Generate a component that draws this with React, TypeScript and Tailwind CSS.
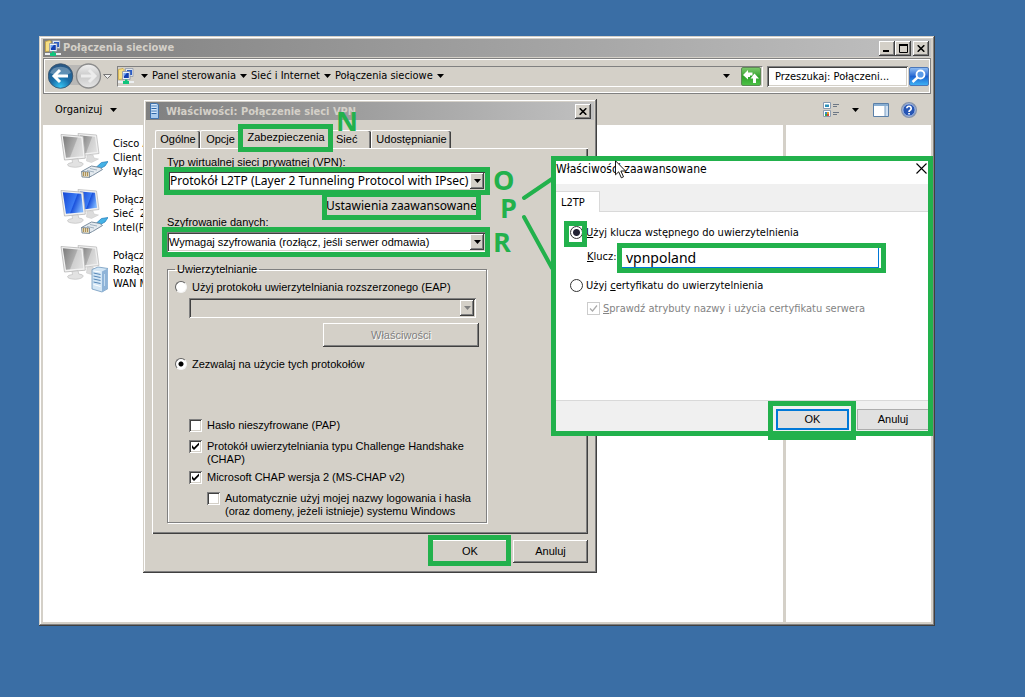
import { useState, type ReactNode } from 'react';

const raised =
  'bg-[#d4d0c8] shadow-[inset_-1px_-1px_#404040,inset_1px_1px_#ffffff,inset_-2px_-2px_#808080]';
const frame =
  'bg-[#d4d0c8] shadow-[inset_-1px_-1px_#404040,inset_1px_1px_#d4d0c8,inset_-2px_-2px_#808080,inset_2px_2px_#ffffff]';
const sunken =
  'shadow-[inset_1px_1px_#808080,inset_-1px_-1px_#ffffff,inset_2px_2px_#404040,inset_-2px_-2px_#d4d0c8]';
const tahoma = "font-['DejaVu_Sans_Condensed','DejaVu_Sans',sans-serif]";
const noto = "font-['Noto_Sans','Open_Sans',sans-serif]";
const arial = "font-['Liberation_Sans',Arial,sans-serif]";

function Highlight({ className }: { className: string }) {
  return <span aria-hidden="true" className={`pointer-events-none absolute border-[5px] border-[#22b14c] ${className}`} />;
}

function Down({ className = 'text-black' }: { className?: string }) {
  return (
    <svg aria-hidden="true" width="7" height="4" viewBox="0 0 7 4" className={`shrink-0 ${className}`}>
      <path d="M0 0h7L3.5 4z" fill="currentColor" />
    </svg>
  );
}

function CloseGlyph() {
  return (
    <svg aria-hidden="true" width="8" height="7" viewBox="0 0 8 7">
      <path d="M.7.3 7.3 6.7M7.3.3.7 6.7" stroke="#000" strokeWidth="1.6" />
    </svg>
  );
}

function TitleButton({ label, children }: { label: string; children: ReactNode }) {
  return (
    <button aria-label={label} className={`flex h-[15px] w-4 items-center justify-center ${raised}`}>
      {children}
    </button>
  );
}

function NetworkIcon() {
  return (
    <svg aria-hidden="true" width="16" height="16" viewBox="0 0 16 16" className="shrink-0">
      <path d="M.5 1.500 5 .5l1 1v9.500l-5.500.5z" fill="#f7df86" stroke="#c9a437" strokeWidth=".7" />
      <path d="M7.500.500h7.500v8H7.500z" fill="#dfe6f0" stroke="#8a94a4" strokeWidth=".7" />
      <path d="M9 2h5v5H9z" fill="#2a5cc8" />
      <path d="M4.500 3.500h7.500v8H4.500z" fill="#eef2f8" stroke="#7c889c" strokeWidth=".7" />
      <path d="M5.800 5h5v5h-5z" fill="#1540b0" />
      <path d="M5.800 5h3l-3 3.500z" fill="#6fa4f0" />
      <path d="M0 14h16" stroke="#eceff2" strokeWidth="2" />
      <path d="M7 11.500h2.500V13H11v3H5v-3h2z" fill="#10c47c" />
    </svg>
  );
}

function Monitors({ active = false, server = false }: { active?: boolean; server?: boolean }) {
  const id = active ? 'on' : server ? 'srv' : 'off';
  return (
    <svg aria-hidden="true" width="48" height="48" viewBox="0 0 48 48" className="shrink-0">
      <defs>
        <linearGradient id={`scr-${id}`} x1="0" y1=".2" x2="1" y2=".6">
          <stop offset="0" stopColor={active ? '#1a4cd6' : '#808080'} />
          <stop offset=".55" stopColor={active ? '#3a7af4' : '#adadad'} />
          <stop offset=".6" stopColor={active ? '#1b52dc' : '#cfcfcf'} />
          <stop offset="1" stopColor={active ? '#7ab4ff' : '#dedede'} />
        </linearGradient>
      </defs>
      <path d="m18 .5 18.500 1.500 2.500 18.500L22 22.500z" fill="#f0f0f0" stroke="#bdbdbd" strokeWidth=".8" />
      <path d="m20 2.500 15 1.200 2 15L23 20.500z" fill={`url(#scr-${id})`} />
      <path d="m27 22.500 6-.5 1 3 4.500 1-7 3.500-5-1.500z" fill="#dcdcdc" stroke="#c6c6c6" strokeWidth=".5" />
      <path d="m1 1.500 22 1.700 2.300 22L4.500 27z" fill="#f2f2f2" stroke="#b4b4b4" strokeWidth=".8" />
      <path d="m2.800 3.300 18.500 1.400 2 18.500L6 24.700z" fill={`url(#scr-${id})`} />
      <path d="m12 26.500 6-.8.8 3.300q4.500.5 4.500 2-1 3-8 3.300Q7.500 34 7.500 31.500q.5-1.500 5-2z" fill="#e2e2e2" stroke="#b8b8b8" strokeWidth=".6" />
      {server ? (
        <g>
          <path d="m32 24.500 6-2.500 10 1.500v20L42 47l-10-3z" fill="#d3e6f5" stroke="#6f97bd" strokeWidth=".8" />
          <path d="m42 26.500 5.800-3v20L42 47z" fill="#8fb4d8" />
          <path d="m33.500 28 7 1.500m-7 1.500 7 1.500m-7 1.500 7 1.500m-7 1.500 7 1.500" stroke="#5687b8" />
          <path d="m33.500 26 7 1m-7 12.500 7 2" stroke="#fff" />
          <path d="M44.500 29v12" stroke="#c5dcf0" />
        </g>
      ) : (
        <g>
          <path d="m36.500 34 5-4.500 6.500-1-3 4.500-5.500 3z" fill="#45b2e6" stroke="#1f7ab8" strokeWidth=".7" />
          <path d="m21.500 38.500 10-5.500 8.500 1.500 2.500 2-10 6-3 1.500z" fill="#e4eaef" stroke="#6f8396" strokeWidth=".9" />
          <path d="m30 35.500 7 1.500M27 37.500l7 1.500" stroke="#8fa3b4" strokeWidth=".8" />
          <path d="m21.500 38.500 8 .5v5.500l-7.500-.5z" fill="#e2d8bc" stroke="#6f8396" strokeWidth=".8" />
          <path d="M23.500 39v4m2-4v4m2-4v4" stroke="#a08040" strokeWidth=".8" />
        </g>
      )}
    </svg>
  );
}

function ServerTower() {
  return (
    <svg aria-hidden="true" width="9" height="16" viewBox="0 0 9 16" className="shrink-0">
      <path d="M.5.500h6l2 1v14h-8z" fill="#a9cbee" stroke="#3f73ae" />
      <path d="M1.500 3h5M1.500 5.500h5M1.500 8h5M1.500 10.500h5" stroke="#2c66a8" />
      <path d="M1.500 1.800h5M1.500 4.200h5M1.500 6.800h5M1.500 9.300h5" stroke="#e8f3ff" />
    </svg>
  );
}

function Combo({ label, value, className, disabled = false }: { label: string; value: string; className: string; disabled?: boolean }) {
  return (
    <div className={`relative flex items-center ${sunken} ${className} ${disabled ? '' : 'bg-white'}`}>
      <select aria-label={label} disabled={disabled} className="h-full w-full appearance-none bg-transparent pr-4 pl-0.5 leading-[18px] text-black outline-none">
        <option>{value}</option>
      </select>
      <span className={`pointer-events-none absolute top-[2px] right-[2px] bottom-[2px] flex w-[14px] items-center justify-center ${raised}`}>
        <Down className={disabled ? 'text-[#808080]' : 'text-black'} />
      </span>
    </div>
  );
}

function ClassicRadio({ label, checked, onChange }: { label: string; checked: boolean; onChange: () => void }) {
  return (
    <label className="flex h-4 items-center gap-[5px]">
      <input
        type="radio"
        name="auth"
        checked={checked}
        onChange={onChange}
        className="size-3 shrink-0 appearance-none rounded-full border border-t-[#606060] border-r-[#f4f4f4] border-b-[#f4f4f4] border-l-[#606060] bg-white checked:bg-[radial-gradient(circle,#000_2px,#fff_3px)]"
      />
      {label}
    </label>
  );
}

function ClassicCheck({ lines, defaultChecked = false }: { lines: string[]; defaultChecked?: boolean }) {
  const [on, setOn] = useState(defaultChecked);
  return (
    <label className="flex items-start gap-[5px]">
      <span className="relative size-[13px] shrink-0">
        <input
          type="checkbox"
          checked={on}
          onChange={() => setOn(!on)}
          className={`block size-[13px] appearance-none bg-white ${sunken}`}
        />
        {on && (
          <svg aria-hidden="true" viewBox="0 0 13 13" className="pointer-events-none absolute inset-0">
            <path d="M3 5v3l2 2 5-5V2.500l-5 5z" fill="#000" />
          </svg>
        )}
      </span>
      <span>
        {lines.map((l) => (
          <span key={l} className="block">
            {l}
          </span>
        ))}
      </span>
    </label>
  );
}

const tabBase =
  'relative rounded-t-[2px] border-t border-l border-white px-1 shadow-[inset_-1px_0_#404040,inset_-2px_0_#808080]';

function VpnDialog() {
  const [auth, setAuth] = useState('list');
  return (
    <section
      aria-label="Właściwości: Połączenie sieci VPN"
      className={`absolute top-[99px] left-[143px] w-[454px] p-[3px] pb-[10px] ${arial} text-[11px] leading-[13px] ${frame}`}
    >
      <header className={`flex h-[18px] items-center gap-[7px] bg-linear-to-r from-[#808080] to-[#c0c0c0] pr-[3px] pl-1 ${tahoma} font-bold text-[#d4d0c8]`}>
        <ServerTower />
        <h2 className="flex-1">Właściwości: Połączenie sieci VPN</h2>
        <TitleButton label="Zamknij">
          <CloseGlyph />
        </TitleButton>
      </header>

      <div className="px-[6px] pt-[8px]">
        <div role="tablist" className="flex items-end pl-[3px]">
          <button role="tab" className={`${tabBase} h-[18px] w-[45px]`}>Ogólne</button>
          <button role="tab" className={`${tabBase} h-[18px] w-[40px]`}>Opcje</button>
          <button role="tab" aria-selected="true" className={`${tabBase} z-10 h-5 w-[91px] pb-0.5`}>
            Zabezpieczenia
            <Highlight className="-top-[5px] -right-[2px] -bottom-[4px] -left-[3px]" />
          </button>
          <button role="tab" className={`${tabBase} h-[18px] w-[40px] text-left`}>Sieć</button>
          <button role="tab" className={`${tabBase} h-[18px] w-[80px]`}>Udostępnianie</button>
        </div>

        <div className="border-t border-l border-white px-[14px] pt-[7px] pb-[11px] shadow-[inset_-1px_-1px_#404040,inset_-2px_-2px_#808080]">
          <p>Typ wirtualnej sieci prywatnej (VPN):</p>
          <div className="relative mt-0.5 ml-px w-[318px]">
            <Combo label="Typ wirtualnej sieci prywatnej" value="Protokół L2TP (Layer 2 Tunneling Protocol with IPsec)" className={`h-5 text-[12px] ${noto}`} />
            <Highlight className="-inset-[4px]" />
          </div>
          <div className="mt-1 ml-[159px] w-[151px]">
            <button className={`relative block h-5 w-full whitespace-nowrap text-[12px] ${noto}`}>
              Ustawienia zaawansowane
              <Highlight className="-top-[3px] -right-[4px] -bottom-[5px] -left-[4px]" />
            </button>
          </div>
          <p className="mt-px">Szyfrowanie danych:</p>
          <div className="relative mt-[3px] w-[319px]">
            <Combo label="Szyfrowanie danych" value="Wymagaj szyfrowania (rozłącz, jeśli serwer odmawia)" className="h-5" />
            <Highlight className="-top-[5px] -right-[4px] -bottom-[5px] -left-[5px]" />
          </div>

          <fieldset className="mt-[11px] w-[319px] border border-[#808080] px-[7px] pb-1 shadow-[1px_1px_#fff,inset_1px_1px_#fff]">
            <legend className="px-0.5">Uwierzytelnianie</legend>
            <div className="pt-[3px]">
              <ClassicRadio label="Użyj protokołu uwierzytelniania rozszerzonego (EAP)" checked={auth === 'eap'} onChange={() => setAuth('eap')} />
            </div>
            <Combo label="Metoda EAP" value="" disabled className="mt-[3px] ml-[14px] h-5 w-[287px]" />
            <button disabled className={`mt-[5px] ml-[148px] block h-6 w-[156px] text-[#808080] [text-shadow:1px_1px_#fff] ${raised}`}>
              Właściwości
            </button>
            <div className="pt-[9px]">
              <ClassicRadio label="Zezwalaj na użycie tych protokołów" checked={auth === 'list'} onChange={() => setAuth('list')} />
            </div>
            <div className="mt-[47px] ml-[14px] flex flex-col gap-2">
              <ClassicCheck lines={['Hasło nieszyfrowane (PAP)']} />
              <ClassicCheck lines={['Protokół uwierzytelniania typu Challenge Handshake', '(CHAP)']} defaultChecked />
              <div className="-mt-[3px]">
                <ClassicCheck lines={['Microsoft CHAP wersja 2 (MS-CHAP v2)']} defaultChecked />
              </div>
              <div className="ml-[18px]">
                <ClassicCheck lines={['Automatycznie użyj mojej nazwy logowania i hasła', '(oraz domeny, jeżeli istnieje) systemu Windows']} />
              </div>
            </div>
          </fieldset>
        </div>

        <footer className="mt-[6px] flex justify-end gap-1">
          <button className={`relative h-[23px] w-[78px] ${raised}`}>
            OK
            <Highlight className="-top-[5px] -right-[2px] -bottom-[3px] -left-[3px]" />
          </button>
          <button className={`h-[23px] w-[75px] ${raised}`}>Anuluj</button>
        </footer>
      </div>
    </section>
  );
}

function AdvancedDialog() {
  const [mode, setMode] = useState('key');
  const radio =
    'size-[13px] shrink-0 appearance-none rounded-full border border-[#333] bg-white checked:bg-[radial-gradient(circle,#223_3px,#fff_4px)]';
  return (
    <section
      aria-label="Właściwości zaawansowane"
      className={`absolute top-[156px] left-[551px] w-[382px] border-[5px] border-[#22b14c] bg-white text-[11px] leading-[15px] ${tahoma}`}
    >
      <header className="flex h-[23px] items-start justify-between">
        <h2 className="text-[12px] leading-4">Właściwości zaawansowane</h2>
        <button aria-label="Zamknij" className="pt-0.5 pr-px">
          <svg aria-hidden="true" width="11" height="11" viewBox="0 0 11 11">
            <path d="m.5.500 10 10m0-10-10 10" stroke="#000" strokeWidth="1.100" />
          </svg>
        </button>
      </header>
      <div role="tablist" className="flex h-7 items-end border-b border-[#d9d9d9] bg-[#f0f0f0]">
        <button role="tab" aria-selected="true" className="-mb-px h-[21px] w-11 border-t border-r border-[#d9d9d9] bg-white pl-[5px] text-left">
          L2TP
        </button>
      </div>
      <div className="h-[188px] pt-[13px] pl-[14px]">
        <label className="flex items-center gap-[3px]">
          <span className="relative size-[13px] shrink-0">
            <input type="radio" name="mode" checked={mode === 'key'} onChange={() => setMode('key')} className={`block ${radio}`} />
            <Highlight className="-top-[5px] -right-[4px] -bottom-[8px] -left-[6px]" />
          </span>
          <span>
            <u>U</u>żyj klucza wstępnego do uwierzytelnienia
          </span>
        </label>
        <div className="mt-2 flex items-center pl-[17px]">
          <label htmlFor="key" className="w-[35px] pb-1">
            <u>K</u>lucz:
          </label>
          <div className="relative">
            <input
              id="key"
              defaultValue="vpnpoland"
              className={`block h-5 w-[257px] border-r border-b border-[#0078d7] bg-white pl-1 text-[14px] outline-none ${noto}`}
            />
            <Highlight className="-top-[5px] -right-[7px] -bottom-[5px] -left-[5px]" />
          </div>
        </div>
        <label className="mt-[10px] flex items-center gap-[3px]">
          <input type="radio" name="mode" checked={mode === 'cert'} onChange={() => setMode('cert')} className={radio} />
          <span>
            Użyj <u>c</u>ertyfikatu do uwierzytelnienia
          </span>
        </label>
        <label className="mt-2 ml-[17px] flex items-center gap-[3px] text-[#838383]">
          <span className="relative size-[13px] shrink-0">
            <input type="checkbox" disabled defaultChecked className="block size-[13px] appearance-none border border-[#ccc] bg-white" />
            <svg aria-hidden="true" viewBox="0 0 13 13" className="pointer-events-none absolute inset-0">
              <path d="m3 6.500 2.500 2.500L10 3.500" fill="none" stroke="#aaa" strokeWidth="1.200" />
            </svg>
          </span>
          <span>
            <u>S</u>prawdź atrybuty nazwy i użycia certyfikatu serwera
          </span>
        </label>
      </div>
      <footer className={`flex h-[31px] justify-end gap-2 border-t border-[#d9d9d9] bg-[#f0f0f0] pt-2 ${arial}`}>
        <button className="relative h-[21px] w-[73px] border-2 border-[#0078d7] bg-[#e1e1e1]">
          OK
          <Highlight className="-top-[10px] -right-[9px] -bottom-[12px] -left-[10px]" />
        </button>
        <button className="h-[21px] w-[71px] border border-r-0 border-[#adadad] bg-[#e1e1e1]">Anuluj</button>
      </footer>
    </section>
  );
}

const connections = [
  { lines: ['Cisco A', 'Client', 'Wyłącz'] },
  { lines: ['Połącze', 'Sieć  2', 'Intel(R)'], active: true },
  { lines: ['Połącze', 'Rozłąc', 'WAN M'], server: true },
];

function ExplorerWindow() {
  return (
    <main className={`flex flex-1 flex-col p-1 text-[11px] leading-[14px] ${tahoma} ${frame}`}>
      <header className="mt-[-1px] flex h-[18px] items-center gap-0.5 bg-linear-to-r from-[#808080] to-[#c0c0c0] pr-[2px] pl-0.5 font-bold text-[#d4d0c8]">
        <NetworkIcon />
        <h1 className="flex-1">Połączenia sieciowe</h1>
        <div className="flex">
          <TitleButton label="Minimalizuj">
            <svg aria-hidden="true" width="8" height="7" viewBox="0 0 8 7"><path d="M0 5h6v2H0z" /></svg>
          </TitleButton>
          <TitleButton label="Maksymalizuj">
            <svg aria-hidden="true" width="9" height="9" viewBox="0 0 9 9">
              <path d="M.5 1v7.500h8V1M0 1h9" fill="none" stroke="#000" />
              <path d="M0 0h9v2H0z" />
            </svg>
          </TitleButton>
        </div>
        <TitleButton label="Zamknij">
          <CloseGlyph />
        </TitleButton>
      </header>

      <nav className="mt-px flex h-9 items-center border border-[#808080] pr-px pl-1 shadow-[inset_1px_1px_#fff,inset_-1px_-1px_#fff]">
        <svg role="img" aria-label="Wstecz i dalej" width="64" height="28" viewBox="0 0 64 28" className="shrink-0">
          <defs>
            <radialGradient id="back" cx=".5" cy=".95" r=".9">
              <stop offset="0" stopColor="#35c5f4" />
              <stop offset=".45" stopColor="#1a6ea8" />
              <stop offset="1" stopColor="#2a5884" />
            </radialGradient>
            <linearGradient id="fwd" x1="0" y1="0" x2="0" y2="1">
              <stop offset="0" stopColor="#f2f2f2" />
              <stop offset=".5" stopColor="#c9c9c9" />
              <stop offset="1" stopColor="#e6e6e6" />
            </linearGradient>
          </defs>
          <rect x="1" y="3" width="50" height="20" rx="10" fill="#b9b8b6" />
          <circle cx="12.500" cy="14" r="12.300" fill="url(#back)" stroke="#3a5068" strokeWidth=".8" />
          <path d="M2 11a11 9 0 0 1 21 0q-10 5-21 0z" fill="#fff" opacity=".28" />
          <path d="M12 8 6 14l6 6M6.500 14H20" fill="none" stroke="#fff" strokeWidth="3" />
          <circle cx="40.500" cy="14" r="12" fill="url(#fwd)" stroke="#8c8c8c" strokeWidth="1.300" />
          <path d="m41 8 6 6-6 6m5.500-6H33" fill="none" stroke="#ececec" strokeWidth="3" />
          <path d="M55.500 12.500h8l-4 4z" fill="#eee" stroke="#777" />
        </svg>
        <div className="ml-[5px] flex h-[21px] flex-1 items-center gap-1 border border-t-[#808080] border-r-white border-b-white border-l-[#808080] pr-px">
          <span className="pr-[3px]">
            <NetworkIcon />
          </span>
          <Down />
          <a href="#panel">Panel sterowania</a>
          <Down />
          <a href="#siec">Sieć i Internet</a>
          <Down />
          <a href="#polaczenia">Połączenia sieciowe</a>
          <Down />
          <span className="flex-1" />
          <Down />
          <button aria-label="Odśwież" className="ml-[7px] flex h-[19px] w-5 items-center justify-center rounded-[2px] border border-[#5d8a55] bg-linear-to-b from-[#79c86a] via-[#2fa32a] to-[#4cc046]">
            <svg aria-hidden="true" width="16" height="15" viewBox="0 0 16 15">
              <path d="M0 6 5 1v2.500h4.500v3H7V8H5v2.500z" fill="#fff" />
              <path d="M16 9.500 11.500 4.500 7.500 9.500h2.500V14h3V9.500z" fill="#fff" />
            </svg>
          </button>
        </div>
        <input
          aria-label="Szukaj"
          defaultValue="Przeszukaj: Połączeni..."
          className={`ml-1 h-[21px] w-[141px] bg-white pl-2 outline-none ${sunken}`}
        />
        <button aria-label="Szukaj w folderze" className="ml-px flex h-[19px] w-5 items-center justify-center rounded-[2px] border border-[#4a76b8] bg-linear-to-b from-[#8fbcf2] via-[#1f63d0] to-[#3fb0f4]">
          <svg aria-hidden="true" width="16" height="15" viewBox="0 0 16 15">
            <circle cx="9.500" cy="5.500" r="4" fill="#5a9ae8" stroke="#fff" strokeWidth="1.800" />
            <path d="m6.500 8.500-5 4.500" stroke="#fff" strokeWidth="2.400" />
          </svg>
        </button>
      </nav>

      <div className="flex h-[31px] items-center pr-[14px] pl-3">
        <button className="flex items-center gap-2">
          Organizuj <Down />
        </button>
        <span className="flex-1" />
        <button aria-label="Zmień widok" className="flex items-center gap-[13px]">
          <svg aria-hidden="true" width="16" height="16" viewBox="0 0 16 16">
            <path d="M.5.500h7v6h-7zM.5 8.500h7v6h-7z" fill="#fff" stroke="#8b9bb0" />
            <path d="M2 2.500h4v2.500H2z" fill="#2d8fb8" />
            <path d="M2 10h2v2H2z" fill="#2f8ac8" /><path d="M4 10h2v2H4z" fill="#e0a030" /><path d="M2 12h2v2H2z" fill="#3aa64a" /><path d="M4 12h2v2H4z" fill="#d8483a" />
            <path d="M10 2.500h6M10 4.500h4M10 10.500h6M10 12.500h4" stroke="#6d7784" />
          </svg>
          <Down />
        </button>
        <button aria-label="Okienko podglądu" className="ml-[14px]">
          <svg aria-hidden="true" width="16" height="14" viewBox="0 0 16 14">
            <path d="M.5.500h15v13H.5z" fill="#fff" stroke="#5a7fa8" />
            <path d="M1 2h14" stroke="#88aed2" strokeWidth="2" />
            <path d="M12 3h3v10h-3z" fill="#cfe0f2" />
            <path d="M12 3v10" stroke="#7b9dc2" />
          </svg>
        </button>
        <button aria-label="Pomoc" className="ml-3">
          <svg aria-hidden="true" width="16" height="16" viewBox="0 0 16 16">
            <circle cx="8" cy="8" r="7.300" fill="#2655b4" stroke="#8795ad" strokeWidth="1.400" />
            <circle cx="8" cy="8" r="6.200" fill="none" stroke="#dfe8f6" strokeWidth=".8" />
            <path d="M5.800 6.300a2.200 2.100 0 1 1 3.300 1.900Q8 8.800 8 10" fill="none" stroke="#fff" strokeWidth="1.700" />
            <path d="M7.200 11h1.700v1.600H7.200z" fill="#fff" />
          </svg>
        </button>
      </div>

      <div className="flex flex-1 gap-[3px]">
        <ul className="flex flex-1 flex-col gap-2 bg-white pt-[8px] pl-[17px]">
          {connections.map((c) => (
            <li key={c.lines.join()} className="flex h-12 gap-[5px]">
              <Monitors active={c.active} server={c.server} />
              <p className="w-[46px] overflow-hidden pt-[4px] whitespace-pre">
                {c.lines.map((l) => (
                  <span key={l} className="block">
                    {l}
                  </span>
                ))}
              </p>
            </li>
          ))}
        </ul>
        <aside className="w-[145px] bg-white" />
      </div>
    </main>
  );
}

function Letter({ children, className }: { children: string; className: string }) {
  return (
    <span className={`absolute font-['Open_Sans','Noto_Sans',sans-serif] text-[27px] leading-[26px] font-bold text-[#22b14c] ${className}`}>
      {children}
    </span>
  );
}

export default function App() {
  return (
    <div className="relative flex min-h-screen flex-col overflow-hidden bg-[#3a6ea5] pt-9 pr-[90px] pb-[71px] pl-[39px] text-black">
      <ExplorerWindow />
      <VpnDialog />
      <AdvancedDialog />
      <svg aria-hidden="true" width="36" height="100" viewBox="0 0 36 100" className="absolute top-[174px] left-[519px]">
        <path d="M5 24 33 5M5 43l28 51" stroke="#22b14c" strokeWidth="4" strokeLinecap="round" />
      </svg>
      <Letter className="top-[108px] left-[336px]">N</Letter>
      <Letter className="top-[167px] left-[493px]">O</Letter>
      <Letter className="top-[195px] left-[500px]">P</Letter>
      <Letter className="top-[229px] left-[493px]">R</Letter>
      <svg aria-hidden="true" width="12" height="19" viewBox="0 0 12 19" className="absolute top-[160px] left-[615px]">
        <path d="M.5.800v14l3.200-3 2.600 6 2.200-1-2.600-5.800h4.600z" fill="#fff" stroke="#000" strokeWidth=".9" />
      </svg>
    </div>
  );
}
